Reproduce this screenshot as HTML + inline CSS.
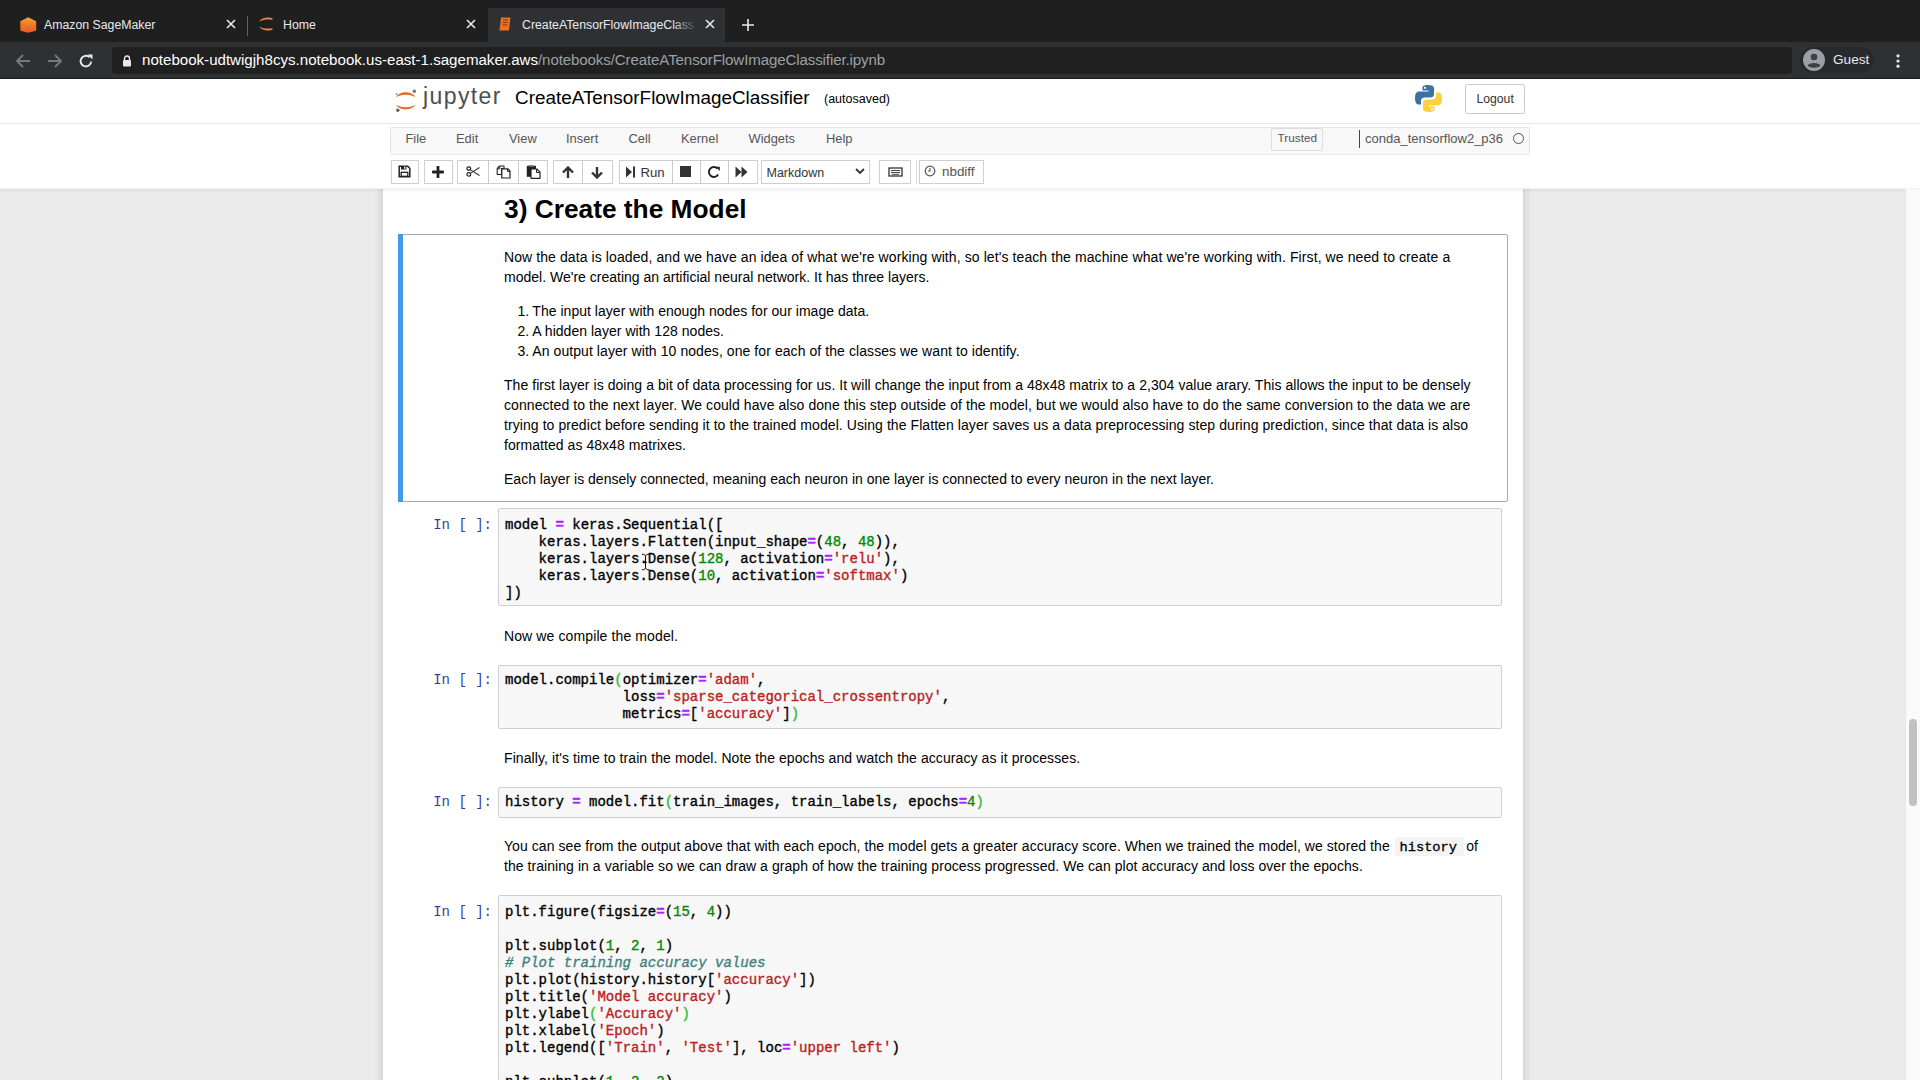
<!DOCTYPE html>
<html><head><meta charset="utf-8">
<style>
*{box-sizing:border-box;margin:0;padding:0}
html,body{width:1920px;height:1080px;overflow:hidden;background:#eaeaea;font-family:"Liberation Sans",sans-serif;position:relative}
div,span,svg{position:absolute}
span{position:static}
pre span{position:static}
#tabstrip{left:0;top:0;width:1920px;height:42px;background:#1f1f20}
.tt{top:18px;font-size:12.3px;color:#e8eaed;white-space:nowrap;line-height:14px}
#toolbar{left:0;top:42px;width:1920px;height:37px;background:#2f3033}
#omni{left:112px;top:4.5px;width:1680px;height:27px;background:#202021;border-radius:4px}
#url{left:30px;top:4.5px;font-size:15.1px;line-height:17px;color:#fff;white-space:nowrap}
#url span{color:#9aa0a6;letter-spacing:-0.12px}
#header{left:0;top:79px;width:1920px;height:45px;background:#fff;border-bottom:1px solid #e7e7e7}
#menubar{left:390px;top:126.5px;width:1140px;height:28px;background:#f8f8f8;border:1px solid #e7e7e7;border-radius:2px}
.menu{font-size:12.9px;line-height:15px;color:#555;white-space:nowrap}
#tbar{left:0;top:155px;width:1920px;height:34px;background:#fff}
.btn{top:5px;height:24px;border:1px solid #cfcfcf;background:#fff}
#site{left:0;top:189px;width:1905px;height:891px;background:#eaeaea;overflow:hidden}
#nb{left:383px;top:-20px;width:1140px;height:1000px;background:#fff;box-shadow:0 0 8px 1px rgba(87,87,87,.22)}
.md{font-size:14px;line-height:20px;color:#000;white-space:nowrap}
.mono{font-family:"Liberation Mono",monospace}
.icode{background:#f4f4f4;border-radius:1px}
.prompt{left:400px;width:92px;text-align:right;font-family:"Liberation Mono",monospace;font-size:14px;line-height:17px;color:#303f9f;white-space:nowrap}
.code{left:498px;width:1004px;background:#f7f7f7;border:1px solid #cfcfcf;border-radius:2px}
pre{position:absolute;left:505px;font-family:"Liberation Mono",monospace;font-size:14px;line-height:17px;color:#000;white-space:pre;margin:0;-webkit-text-stroke:0.35px}
.o{color:#aa22ff;font-weight:bold}
.n{color:#008800}
.s{color:#ba2121}
.g{color:#33bb33}
.c{color:#408080;font-style:italic}
#scroll{left:1905px;top:189px;width:15px;height:891px;background:#fafafa;border-left:1px solid #e8e8e8}
</style></head><body>
<!-- browser tab strip -->
<div id="tabstrip">
  <!-- tab1 -->
  <svg style="left:20px;top:16.5px" width="16.5" height="16" viewBox="0 0 16.5 16"><defs><linearGradient id="sg" x1="0" y1="0" x2="0" y2="1"><stop offset="0" stop-color="#f5a53a"/><stop offset="0.45" stop-color="#f07a2a"/><stop offset="1" stop-color="#e85a25"/></linearGradient></defs><path d="M8.25 0.3L16.2 4.2V13.8L8.25 15.8L0.3 13.8V4.2z" fill="url(#sg)"/></svg>
  <div class="tt" style="left:44px">Amazon SageMaker</div>
  <svg style="left:226px;top:19px" width="10" height="10" viewBox="0 0 10 10"><path d="M1 1L9 9M9 1L1 9" stroke="#e8eaed" stroke-width="1.6"/></svg>
  <div style="left:247px;top:16px;width:1px;height:20px;background:#5f6368"></div>
  <!-- tab2 -->
  <svg style="left:258px;top:16px" width="16" height="16" viewBox="0 0 16 16"><path d="M1.5 5.5C3.5 0.8 12 0.8 14.5 2.5L14.5 4C12 3 5 3 1.5 5.5z" fill="#e9824c"/><path d="M1.5 10.5C3.5 15.2 12 15.2 14.5 13.5L14.5 12C12 13 5 13 1.5 10.5z" fill="#e9824c"/></svg>
  <div class="tt" style="left:283px">Home</div>
  <svg style="left:466px;top:19px" width="10" height="10" viewBox="0 0 10 10"><path d="M1 1L9 9M9 1L1 9" stroke="#e8eaed" stroke-width="1.6"/></svg>
  <!-- tab3 active -->
  <div style="left:488px;top:8px;width:237px;height:34px;background:#2f3033"></div>
  <svg style="left:497px;top:16px" width="16" height="16" viewBox="0 0 16 16"><path d="M4 1.5h9.5l-1.5 13H2.5z" fill="#e8731f"/><path d="M6 4h5M5.7 6.5h5M5.4 9h5" stroke="#8a3a10" stroke-width="1"/></svg>
  <div class="tt" style="left:522px;width:175px;overflow:hidden">CreateATensorFlowImageClass</div>
  <div style="left:672px;top:12px;width:26px;height:24px;background:linear-gradient(to right,rgba(47,48,51,0),#2f3033)"></div>
  <svg style="left:705px;top:19px" width="10" height="10" viewBox="0 0 10 10"><path d="M1 1L9 9M9 1L1 9" stroke="#e8eaed" stroke-width="1.6"/></svg>
  <svg style="left:741px;top:18px" width="14" height="14" viewBox="0 0 14 14"><path d="M7 1V13M1 7H13" stroke="#e8eaed" stroke-width="1.6"/></svg>
</div>
<!-- browser toolbar -->
<div id="toolbar">
  <svg style="left:15px;top:11px" width="16" height="16" viewBox="0 0 16 16"><path d="M15 8H2M8 2L2 8L8 14" stroke="#78797c" stroke-width="1.8" fill="none"/></svg>
  <svg style="left:47px;top:11px" width="16" height="16" viewBox="0 0 16 16"><path d="M1 8H14M8 2L14 8L8 14" stroke="#78797c" stroke-width="1.8" fill="none"/></svg>
  <svg style="left:78px;top:11px" width="16" height="16" viewBox="0 0 16 16"><path d="M13.2 8.5A5.3 5.3 0 1 1 11.5 4.2" stroke="#e8eaed" stroke-width="1.9" fill="none"/><path d="M9.5 1.5H14.5V6.5z" fill="#e8eaed"/></svg>
  <div id="omni">
    <svg style="left:10px;top:8px" width="10" height="12" viewBox="0 0 10 12"><path d="M2.5 5V3.5A2.5 2.5 0 0 1 7.5 3.5V5" stroke="#e8eaed" stroke-width="1.4" fill="none"/><rect x="1" y="5" width="8" height="6.5" rx="1" fill="#e8eaed"/></svg>
    <div id="url">notebook-udtwigjh8cys.notebook.us-east-1.sagemaker.aws<span>/notebooks/CreateATensorFlowImageClassifier.ipynb</span></div>
  </div>
  <div style="left:1800px;top:5px;width:74px;height:26px;background:#28292c;border-radius:13px"></div>
  <svg style="left:1803px;top:7px" width="22" height="22" viewBox="0 0 22 22"><circle cx="11" cy="11" r="11" fill="#9aa0a6"/><circle cx="11" cy="8" r="3.3" fill="#3c4043"/><path d="M4.5 16.5C6 13 16 13 17.5 16.5C15 19.5 7 19.5 4.5 16.5z" fill="#3c4043"/></svg>
  <div style="left:1833px;top:10px;font-size:13.6px;line-height:16px;color:#e8eaed">Guest</div>
  <svg style="left:1895px;top:11px" width="6" height="16" viewBox="0 0 6 16"><circle cx="3" cy="2.8" r="1.6" fill="#e8eaed"/><circle cx="3" cy="8" r="1.6" fill="#e8eaed"/><circle cx="3" cy="13.2" r="1.6" fill="#e8eaed"/></svg>
  <div style="left:0;top:35.5px;width:1920px;height:1.5px;background:#1c1c1d"></div>
</div>
<!-- jupyter header -->
<div style="left:0;top:79px;width:1920px;height:110px;background:#fff"></div>
<div id="header">
  <svg style="left:393px;top:5px" width="26" height="32" viewBox="0 0 26 32"><path d="M3.2 13.2C6 6.5 19 6.5 22.5 13.2C18 9.8 7.5 9.8 3.2 13.2z" fill="#e46e2e"/><path d="M3.2 20.5C6 27 19 27 22.5 20.5C18 24 7.5 24 3.2 20.5z" fill="#e46e2e"/><circle cx="21.3" cy="7.3" r="1.7" fill="#767677"/><circle cx="4.8" cy="26.2" r="1.7" fill="#616262"/><circle cx="3.6" cy="10" r="1.1" fill="#9e9e9e"/></svg>
  <div style="left:423px;top:1.5px;font-size:23px;line-height:30px;color:#4e4e4e;letter-spacing:1.4px">jupyter</div>
  <div style="left:515px;top:8px;font-size:18.9px;line-height:22px;color:#000;white-space:nowrap">CreateATensorFlowImageClassifier</div>
  <div style="left:824px;top:13px;font-size:12.5px;line-height:15px;color:#000">(autosaved)</div>
  <svg style="left:1414px;top:5px" width="29" height="29" viewBox="0 0 29 29"><path d="M14 1C8 1 8.5 3.5 8.5 3.5V6.5H14.5V7.5H5C5 7.5 1 7 1 14C1 21 4.5 20.5 4.5 20.5H7V17C7 17 7 13.5 10.5 13.5H16.5C16.5 13.5 20 13.5 20 10V4.5C20 4.5 20.5 1 14 1z" fill="#3a72a4"/><circle cx="11" cy="3.8" r="1.1" fill="#fff"/><path d="M15 28C21 28 20.5 25.5 20.5 25.5V22.5H14.5V21.5H24C24 21.5 28 22 28 15C28 8 24.5 8.5 24.5 8.5H22V12C22 12 22 15.5 18.5 15.5H12.5C12.5 15.5 9 15.5 9 19V24.5C9 24.5 8.5 28 15 28z" fill="#fdd13e"/><circle cx="18" cy="25.2" r="1.1" fill="#fff"/></svg>
  <div style="left:1465px;top:5px;width:60px;height:29.5px;border:1px solid #ccc;border-radius:2px;background:#fff"></div>
  <div style="left:1476.5px;top:12.5px;font-size:12.2px;line-height:15px;color:#333">Logout</div>
</div>
<!-- menubar -->
<div id="menubar"></div>
<div class="menu" style="left:405.5px;top:130.5px">File</div>
<div class="menu" style="left:456px;top:130.5px">Edit</div>
<div class="menu" style="left:509px;top:130.5px">View</div>
<div class="menu" style="left:566px;top:130.5px">Insert</div>
<div class="menu" style="left:628.5px;top:130.5px">Cell</div>
<div class="menu" style="left:681px;top:130.5px">Kernel</div>
<div class="menu" style="left:748.5px;top:130.5px">Widgets</div>
<div class="menu" style="left:826px;top:130.5px">Help</div>
<div style="left:1271px;top:128px;width:52px;height:23px;border:1px solid #ddd;border-radius:2px;background:#f8f8f8"></div>
<div class="menu" style="left:1277.5px;top:130.5px;font-size:11.8px">Trusted</div>
<div style="left:1359px;top:130px;width:1px;height:18px;background:#444"></div>
<div class="menu" style="left:1365px;top:130.5px;font-size:13px">conda_tensorflow2_p36</div>
<div style="left:1513px;top:133px;width:10.8px;height:10.8px;border:1.7px solid #555;border-radius:50%"></div>
<!-- toolbar -->
<div id="tbar"></div>
<div class="btn" style="left:390.5px;top:160px;width:28px"></div>
<div class="btn" style="left:424px;top:160px;width:28.5px"></div>
<div class="btn" style="left:457px;top:160px;width:91px"></div>
<div style="left:487.5px;top:160px;width:1px;height:24px;background:#ccc"></div>
<div style="left:517.5px;top:160px;width:1px;height:24px;background:#ccc"></div>
<div class="btn" style="left:553px;top:160px;width:60px"></div>
<div style="left:582px;top:160px;width:1px;height:24px;background:#ccc"></div>
<div class="btn" style="left:618.5px;top:160px;width:139px"></div>
<div style="left:671.5px;top:160px;width:1px;height:24px;background:#ccc"></div>
<div style="left:700px;top:160px;width:1px;height:24px;background:#ccc"></div>
<div style="left:728px;top:160px;width:1px;height:24px;background:#ccc"></div>
<div class="btn" style="left:761px;top:160px;width:109px"></div>
<div class="btn" style="left:879px;top:160px;width:32px"></div>
<div style="left:916px;top:160px;width:1px;height:24px;background:#ddd"></div>
<div class="btn" style="left:919px;top:160px;width:65px"></div>
<!-- toolbar icons -->
<svg style="left:398px;top:165px" width="13" height="13" viewBox="0 0 13 13"><path d="M1.2 1.2H9.8L11.8 3.2V11.8H1.2z" fill="none" stroke="#222" stroke-width="1.5"/><rect x="3" y="1" width="5.5" height="3.5" fill="#222"/><rect x="6.2" y="1.6" width="1.3" height="2.2" fill="#fff"/><rect x="3.2" y="7.3" width="6.6" height="4" fill="none" stroke="#222" stroke-width="1.3"/></svg>
<svg style="left:432px;top:165.5px" width="12" height="12" viewBox="0 0 12 12"><path d="M6 1V11M1 6H11" stroke="#222" stroke-width="2.8" stroke-linecap="round"/></svg>
<svg style="left:466px;top:166px" width="14" height="11" viewBox="0 0 14 11"><ellipse cx="2.8" cy="2.6" rx="1.9" ry="1.7" fill="none" stroke="#222" stroke-width="1.2"/><ellipse cx="2.8" cy="8.4" rx="1.9" ry="1.7" fill="none" stroke="#222" stroke-width="1.2"/><path d="M4.3 3.6L13.5 9.5M4.3 7.4L13.5 1.5" stroke="#333" stroke-width="1.1"/></svg>
<svg style="left:495.5px;top:164.5px" width="15" height="14" viewBox="0 0 15 14"><path d="M3.5 1H8V3.5H5.5V9.5H1.2V3.3z" fill="#fff" stroke="#222" stroke-width="1.1" stroke-linejoin="round"/><path d="M1.2 3.8H3.8V1.3" fill="none" stroke="#222" stroke-width="1"/><path d="M8 3.8H12L14 6V13H5.8V3.8z" fill="#fff" stroke="#222" stroke-width="1.2" stroke-linejoin="round"/><path d="M11.5 4V6.5H14" fill="none" stroke="#222" stroke-width="1"/></svg>
<svg style="left:525.5px;top:164.5px" width="15" height="14" viewBox="0 0 15 14"><rect x="0.8" y="0.8" width="9.2" height="11" fill="#222"/><rect x="2.5" y="0.3" width="5.5" height="1.6" fill="#666"/><path d="M5 4H10.8L14 7.2V13.3H5z" fill="#fff" stroke="#222" stroke-width="1.2" stroke-linejoin="round"/><path d="M10.5 4.2V7.5H13.8" fill="none" stroke="#222" stroke-width="1"/></svg>
<svg style="left:562px;top:166px" width="12" height="13" viewBox="0 0 12 13"><path d="M6 12V2M1 6.5L6 1.5L11 6.5" stroke="#333" stroke-width="2.4" fill="none"/></svg>
<svg style="left:591px;top:166px" width="12" height="13" viewBox="0 0 12 13"><path d="M6 1V11M1 6.5L6 11.5L11 6.5" stroke="#333" stroke-width="2.4" fill="none"/></svg>
<svg style="left:625px;top:166px" width="11" height="12" viewBox="0 0 11 12"><path d="M1 0.5L7 6L1 11.5z" fill="#333"/><rect x="8" y="0.5" width="2" height="11" fill="#333"/></svg>
<div style="left:640.5px;top:164.5px;font-size:13.2px;line-height:15px;color:#333">Run</div>
<div style="left:680px;top:166px;width:11px;height:11px;background:#333"></div>
<svg style="left:708px;top:165.5px" width="13" height="12" viewBox="0 0 13 12"><path d="M10.2 8.6A5 5 0 1 1 9.6 2.6" stroke="#222" stroke-width="1.9" fill="none"/><path d="M7.6 0.8H11.8V5z" fill="#222"/></svg>
<svg style="left:735px;top:166px" width="13" height="12" viewBox="0 0 13 12"><path d="M0.5 0.5L6.5 6L0.5 11.5zM6.5 0.5L12.5 6L6.5 11.5z" fill="#333"/></svg>
<div style="left:766.5px;top:166px;font-size:12.5px;line-height:15px;color:#333">Markdown</div>
<svg style="left:855px;top:168px" width="10" height="7" viewBox="0 0 10 7"><path d="M1 1L5 5L9 1" stroke="#333" stroke-width="1.8" fill="none"/></svg>
<svg style="left:888px;top:167px" width="15" height="10" viewBox="0 0 15 10"><rect x="1" y="1" width="13" height="8" fill="none" stroke="#333" stroke-width="1.3"/><path d="M3 3.5H12M3 5.5H12M4 7.3H11" stroke="#333" stroke-width="0.9"/></svg>
<svg style="left:924px;top:165px" width="12" height="12" viewBox="0 0 12 12"><circle cx="6" cy="6" r="4.8" fill="none" stroke="#555" stroke-width="1.2"/><path d="M6 3V6H4" stroke="#555" stroke-width="1.1" fill="none"/></svg>
<div style="left:942px;top:163.5px;font-size:13.4px;line-height:15px;color:#555">nbdiff</div>
<div style="left:0;top:188px;width:1920px;height:4px;background:linear-gradient(rgba(0,0,0,.06),rgba(0,0,0,0))"></div>
<!-- notebook site -->
<div id="site"><div id="nb"></div></div>
<div style="left:0;top:189px;width:1905px;height:4px;background:linear-gradient(rgba(0,0,0,.05),rgba(0,0,0,0))"></div>
<div style="left:504px;top:193.7px;font-size:26.3px;line-height:30px;font-weight:bold;color:#000;white-space:nowrap">3) Create the Model</div>
<!-- selected md cell -->
<div style="left:398px;top:234px;width:1110px;height:268px;border:1px solid #ababab;border-radius:2px"></div>
<div style="left:398px;top:234px;width:5px;height:268px;background:#429be8"></div>
<div class="md" style="left:504px;top:246.9px;letter-spacing:0.092px">Now the data is loaded, and we have an idea of what we&#x27;re working with, so let&#x27;s teach the machine what we&#x27;re working with. First, we need to create a</div>
<div class="md" style="left:504px;top:266.9px;letter-spacing:0.005px">model. We&#x27;re creating an artificial neural network. It has three layers.</div>
<div class="md" style="left:532.3px;top:300.9px;letter-spacing:0.028px">The input layer with enough nodes for our image data.</div>
<div class="md" style="left:532.3px;top:320.9px;letter-spacing:0.033px">A hidden layer with 128 nodes.</div>
<div class="md" style="left:532.3px;top:340.9px;letter-spacing:0.074px">An output layer with 10 nodes, one for each of the classes we want to identify.</div>
<div class="md" style="left:504px;top:374.9px;letter-spacing:0.052px">The first layer is doing a bit of data processing for us. It will change the input from a 48x48 matrix to a 2,304 value arary. This allows the input to be densely</div>
<div class="md" style="left:504px;top:394.9px;letter-spacing:0.072px">connected to the next layer. We could have also done this step outside of the model, but we would also have to do the same conversion to the data we are</div>
<div class="md" style="left:504px;top:414.9px;letter-spacing:0.073px">trying to predict before sending it to the trained model. Using the Flatten layer saves us a data preprocessing step during prediction, since that data is also</div>
<div class="md" style="left:504px;top:434.9px;letter-spacing:0.052px">formatted as 48x48 matrixes.</div>
<div class="md" style="left:504px;top:468.9px;letter-spacing:0.002px">Each layer is densely connected, meaning each neuron in one layer is connected to every neuron in the next layer.</div>
<div class="md" style="left:504px;top:626.1px;letter-spacing:0.113px">Now we compile the model.</div>
<div class="md" style="left:504px;top:748.1px;letter-spacing:0.086px">Finally, it&#x27;s time to train the model. Note the epochs and watch the accuracy as it processes.</div>
<div class="md" style="left:504px;top:836.1px;letter-spacing:0.067px">You can see from the output above that with each epoch, the model gets a greater accuracy score. When we trained the model, we stored the</div>
<div class="md" style="left:504px;top:856.1px;letter-spacing:0.057px">the training in a variable so we can draw a graph of how the training process progressed. We can plot accuracy and loss over the epochs.</div>
<div class="md" style="left:517.5px;top:300.9px">1.</div>
<div class="md" style="left:517.5px;top:320.9px">2.</div>
<div class="md" style="left:517.5px;top:340.9px">3.</div>
<div class="icode" style="left:1394.5px;top:837px;width:69px;height:18.5px"></div>
<div class="md mono" style="left:1399.5px;top:837.6px;font-size:13.7px;-webkit-text-stroke:0.3px">history</div>
<div class="md" style="left:1466.3px;top:836.1px">of</div>
<div class="code" style="top:508px;height:98px"></div>
<div class="prompt" style="top:516.9px">In&nbsp;[&nbsp;]:</div>
<pre style="top:516.9px">model <span class="o">=</span> keras.Sequential([
    keras.layers.Flatten(input_shape<span class="o">=</span>(<span class="n">48</span>, <span class="n">48</span>)),
    keras.layers.Dense(<span class="n">128</span>, activation<span class="o">=</span><span class="s">&#x27;relu&#x27;</span>),
    keras.layers.Dense(<span class="n">10</span>, activation<span class="o">=</span><span class="s">&#x27;softmax&#x27;</span>)
])</pre>
<div class="code" style="top:665px;height:64px"></div>
<div class="prompt" style="top:671.5px">In&nbsp;[&nbsp;]:</div>
<pre style="top:671.5px">model.compile<span class="g">(</span>optimizer<span class="o">=</span><span class="s">&#x27;adam&#x27;</span>,
              loss<span class="o">=</span><span class="s">&#x27;sparse_categorical_crossentropy&#x27;</span>,
              metrics<span class="o">=</span>[<span class="s">&#x27;accuracy&#x27;</span>]<span class="g">)</span></pre>
<div class="code" style="top:787px;height:31px"></div>
<div class="prompt" style="top:794.3px">In&nbsp;[&nbsp;]:</div>
<pre style="top:794.3px">history <span class="o">=</span> model.fit<span class="g">(</span>train_images, train_labels, epochs<span class="o">=</span><span class="n">4</span><span class="g">)</span></pre>
<div class="code" style="top:895px;height:305px"></div>
<div class="prompt" style="top:903.8px">In&nbsp;[&nbsp;]:</div>
<pre style="top:903.8px">plt.figure(figsize<span class="o">=</span>(<span class="n">15</span>, <span class="n">4</span>))

plt.subplot(<span class="n">1</span>, <span class="n">2</span>, <span class="n">1</span>)
<span class="c"># Plot training accuracy values</span>
plt.plot(history.history[<span class="s">&#x27;accuracy&#x27;</span>])
plt.title(<span class="s">&#x27;Model accuracy&#x27;</span>)
plt.ylabel<span class="g">(</span><span class="s">&#x27;Accuracy&#x27;</span><span class="g">)</span>
plt.xlabel(<span class="s">&#x27;Epoch&#x27;</span>)
plt.legend([<span class="s">&#x27;Train&#x27;</span>, <span class="s">&#x27;Test&#x27;</span>], loc<span class="o">=</span><span class="s">&#x27;upper left&#x27;</span>)

plt.subplot(<span class="n">1</span>, <span class="n">2</span>, <span class="n">2</span>)</pre>
<svg style="left:641px;top:553px" width="9" height="18" viewBox="0 0 9 18"><path d="M1 1.2C3 1.2 4.5 2 4.5 3.5V14.5C4.5 16 3 16.8 1 16.8M8 1.2C6 1.2 4.5 2 4.5 3.5M8 16.8C6 16.8 4.5 16 4.5 14.5M3 9.3H6" stroke="#000" stroke-width="1" fill="none"/></svg>
<div id="scroll"><div style="left:3px;top:530px;width:8px;height:87px;background:#c1c1c1;border-radius:4px"></div></div>
</body></html>
